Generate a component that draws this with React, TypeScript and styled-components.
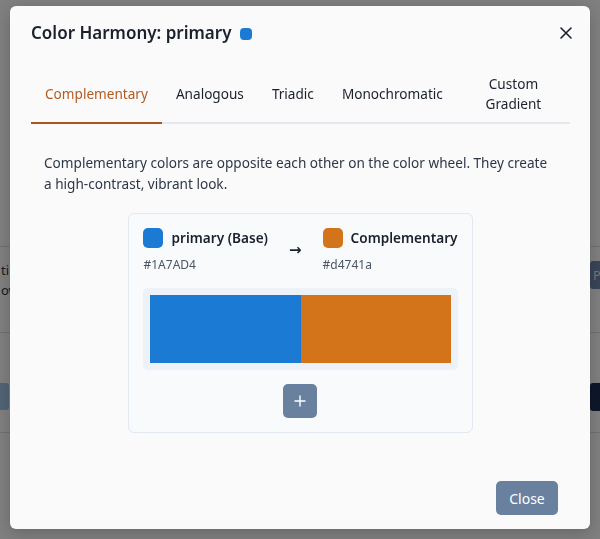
import React from "react";
import styled, { createGlobalStyle } from "styled-components";

const Global = createGlobalStyle`
  html, body { margin: 0; padding: 0; }
  body {
    font-family: "Noto Sans", "Open Sans", sans-serif;
    background: #ffffff;
    color: #1a202c;
    width: 600px;
    height: 539px;
    overflow: hidden;
  }
  * { box-sizing: border-box; }
`;

/* ---------- background page (behind the overlay) ---------- */
const Page = styled.div`
  width: 600px;
  height: 539px;
  display: flex;
  flex-direction: column;
  background: #ffffff;
`;

const PageTop = styled.div`
  height: 247px;
  border-bottom: 1px solid #d8dee6;
`;

const PageRow = styled.div<{ $h: number }>`
  height: ${(p) => p.$h}px;
  display: flex;
  justify-content: space-between;
  align-items: flex-start;
  border-bottom: 1px solid #d8dee6;
`;

const RowText = styled.div`
  font-size: 13px;
  line-height: 20px;
  color: #2d3748;
  padding-top: 13px;
  padding-left: 1px;
`;

const RowButton = styled.div<{ $bg: string; $mt: number }>`
  margin-top: ${(p) => p.$mt}px;
  width: 10px;
  height: 28px;
  background: ${(p) => p.$bg};
  color: #e2e8f0;
  font-size: 13px;
  line-height: 28px;
  padding-left: 3px;
  border-radius: 3px 0 0 3px;
  overflow: hidden;
`;

const LeftBar = styled.div`
  margin-top: 50px;
  width: 9px;
  height: 27px;
  background: #a3c6ea;
  border-radius: 0 3px 3px 0;
`;

/* ---------- overlay & modal ---------- */
const Overlay = styled.div`
  position: fixed;
  inset: 0;
  background: rgba(0, 0, 0, 0.5);
  display: flex;
  align-items: flex-start;
  justify-content: center;
  padding-top: 6px;
`;

const Modal = styled.div`
  position: relative;
  width: 580px;
  background: #fafafa;
  border-radius: 6px;
  box-shadow: 0 4px 16px rgba(0, 0, 0, 0.2);
  display: flex;
  flex-direction: column;
`;

const Header = styled.div`
  padding: 13px 21px 0 21px;
  display: flex;
  align-items: center;
  gap: 9px;
`;

const Title = styled.h2`
  margin: 0;
  font-size: 17px;
  line-height: 28px;
  font-weight: 600;
  color: #1a202c;
`;

const TitleDot = styled.span`
  width: 12px;
  height: 12px;
  border-radius: 4px;
  background: #1a7ad4;
  margin-top: 1px;
`;

const CloseX = styled.button`
  position: absolute;
  top: 11px;
  right: 8px;
  width: 32px;
  height: 32px;
  border: none;
  background: transparent;
  display: flex;
  align-items: center;
  justify-content: center;
  cursor: pointer;
  padding: 0;
`;

const Body = styled.div`
  padding: 0 20px 0 21px;
`;

const TabList = styled.div`
  margin-top: 19px;
  display: flex;
  border-bottom: 2px solid #e4e9f0;
`;

const Tab = styled.div<{ $active?: boolean; $shrink?: boolean }>`
  flex: ${(p) => (p.$shrink ? "1 1 auto" : "0 0 auto")};
  min-width: 0;
  padding: 8px 14px;
  min-height: 56px;
  display: flex;
  align-items: center;
  justify-content: center;
  text-align: center;
  font-size: 13.6px;
  line-height: 20px;
  color: ${(p) => (p.$active ? "#b35a22" : "#1a202c")};
  margin-bottom: -2px;
  border-bottom: 2px solid ${(p) => (p.$active ? "#b0541f" : "transparent")};
`;

const Panel = styled.div`
  padding: 28px 13px 0 13px;
  display: flex;
  flex-direction: column;
  align-items: center;
`;

const Description = styled.p`
  margin: 0;
  align-self: stretch;
  font-size: 13.6px;
  line-height: 21px;
  color: #2d3748;
`;

const Card = styled.div`
  margin-top: 19px;
  padding: 14px;
  border: 1px solid #e2e8f0;
  border-radius: 6px;
  background: #f8fafc;
  display: flex;
  flex-direction: column;
  align-items: center;
`;

const PairRow = styled.div`
  display: flex;
  align-items: center;
  gap: 21px;
  align-self: stretch;
`;

const ColorCol = styled.div`
  display: flex;
  flex-direction: column;
  gap: 8px;
`;

const ColorHead = styled.div`
  display: flex;
  align-items: center;
  gap: 8px;
`;

const Swatch = styled.span<{ $c: string }>`
  width: 20px;
  height: 20px;
  border-radius: 5px;
  background: ${(p) => p.$c};
`;

const ColorName = styled.span`
  font-size: 13.6px;
  line-height: 20px;
  font-weight: 600;
  color: #1a202c;
`;

const Hex = styled.span`
  font-size: 12px;
  line-height: 18px;
  color: #4a5568;
`;

const Arrow = styled.span`
  font-family: "DejaVu Sans", sans-serif;
  font-size: 15px;
  line-height: 20px;
  font-weight: 700;
  color: #1a202c;
  margin-top: -2px;
`;

const BarFrame = styled.div`
  margin-top: 14px;
  align-self: stretch;
  padding: 7px;
  border-radius: 5px;
  background: #edf2f8;
`;

const Bar = styled.div`
  height: 68px;
  display: flex;
`;

const BarPart = styled.div<{ $c: string }>`
  flex: 1;
  background: ${(p) => p.$c};
`;

const SlateButton = styled.button<{ $w?: number }>`
  border: none;
  border-radius: 5px;
  background: #6a809f;
  color: #ffffff;
  font-family: inherit;
  font-size: 14px;
  height: 34px;
  width: ${(p) => (p.$w ? `${p.$w}px` : "auto")};
  padding: 0;
  display: flex;
  align-items: center;
  justify-content: center;
  cursor: pointer;
`;

const PlusWrap = styled.div`
  margin-top: 14px;
`;

const Footer = styled.div`
  margin-top: 48px;
  padding: 0 32px 14px 0;
  display: flex;
  justify-content: flex-end;
`;

export default function App() {
  return (
    <>
      <Global />
      <Page>
        <PageTop />
        <PageRow $h={86}>
          <RowText>
            ti
            <br />
            ow
          </RowText>
          <RowButton $bg="#728aae" $mt={14}>
            P
          </RowButton>
        </PageRow>
        <PageRow $h={100}>
          <LeftBar />
          <RowButton $bg="#1c2e52" $mt={50} />
        </PageRow>
      </Page>
      <Overlay>
        <Modal>
          <Header>
            <Title>Color Harmony: primary</Title>
            <TitleDot />
          </Header>
          <CloseX aria-label="Close">
            <svg width="12" height="12" viewBox="0 0 12 12">
              <path d="M1 1 L11 11 M11 1 L1 11" stroke="#1a202c" strokeWidth="1.6" strokeLinecap="round" />
            </svg>
          </CloseX>
          <Body>
            <TabList>
              <Tab $active>Complementary</Tab>
              <Tab>Analogous</Tab>
              <Tab>Triadic</Tab>
              <Tab>Monochromatic</Tab>
              <Tab $shrink>Custom Gradient</Tab>
            </TabList>
            <Panel>
              <Description>
                Complementary colors are opposite each other on the color wheel. They create a
                high-contrast, vibrant look.
              </Description>
              <Card>
                <PairRow>
                  <ColorCol>
                    <ColorHead>
                      <Swatch $c="#1a7ad4" />
                      <ColorName>primary (Base)</ColorName>
                    </ColorHead>
                    <Hex>#1A7AD4</Hex>
                  </ColorCol>
                  <Arrow>→</Arrow>
                  <ColorCol>
                    <ColorHead>
                      <Swatch $c="#d4741a" />
                      <ColorName>Complementary</ColorName>
                    </ColorHead>
                    <Hex>#d4741a</Hex>
                  </ColorCol>
                </PairRow>
                <BarFrame>
                  <Bar>
                    <BarPart $c="#1a7ad4" />
                    <BarPart $c="#d4741a" />
                  </Bar>
                </BarFrame>
                <PlusWrap>
                  <SlateButton $w={34} aria-label="Add color">
                    <svg width="12" height="12" viewBox="0 0 12 12">
                      <path d="M6 1 V11 M1 6 H11" stroke="#ffffff" strokeWidth="1.4" strokeLinecap="round" />
                    </svg>
                  </SlateButton>
                </PlusWrap>
              </Card>
            </Panel>
          </Body>
          <Footer>
            <SlateButton $w={62}>Close</SlateButton>
          </Footer>
        </Modal>
      </Overlay>
    </>
  );
}
